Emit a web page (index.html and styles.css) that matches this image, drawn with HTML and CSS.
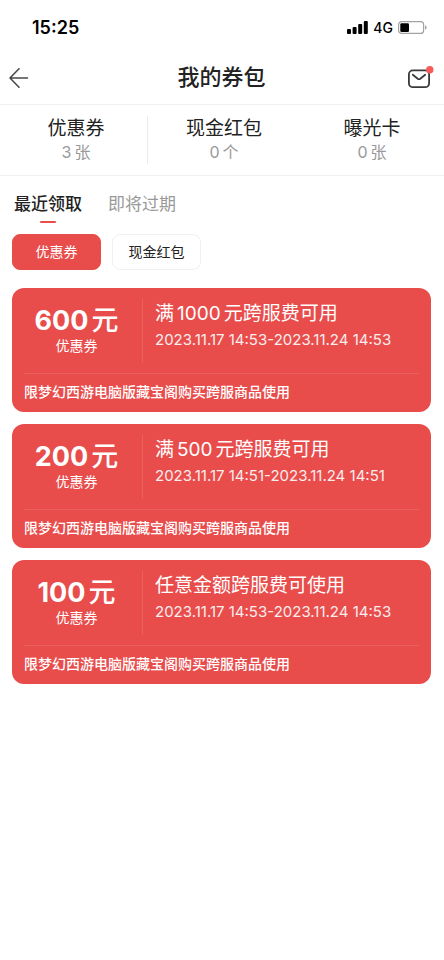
FILE: index.html
```html
<!DOCTYPE html>
<html lang="zh-CN">
<head>
<meta charset="utf-8">
<meta name="viewport" content="width=device-width, initial-scale=1">
<title>我的券包</title>
<link rel="stylesheet" href="styles.css">
</head>
<body>
<div class="status">
  <span class="time">15:25</span>
  <div class="indicators">
    <svg width="21" height="13" viewBox="0 0 21 13" aria-hidden="true">
      <rect x="0" y="8" width="4" height="5" rx="1"/>
      <rect x="5.6" y="6" width="4" height="7" rx="1"/>
      <rect x="11.2" y="3" width="4" height="10" rx="1"/>
      <rect x="16.8" y="0" width="4" height="13" rx="1"/>
    </svg>
    <span class="network">4G</span>
    <svg width="29" height="13" viewBox="0 0 29 13" aria-hidden="true">
      <rect x="0.6" y="0.6" width="25" height="11.8" rx="3" fill="none" stroke="#a3a3a3" stroke-width="1.2"/>
      <rect x="2.3" y="2.2" width="8.7" height="8.7" rx="1.2"/>
      <path d="M27 4.3c2.2.8 2.2 3.6 0 4.4z" fill="#a3a3a3"/>
    </svg>
  </div>
</div>

<header class="nav">
  <button class="icon-button" type="button" aria-label="返回">
    <svg width="20" height="20" viewBox="0 0 20 20" fill="none" stroke="#4a4a4a" stroke-width="1.6" stroke-linecap="round" stroke-linejoin="round" aria-hidden="true">
      <path d="M18.5 10H1.2M10 .8L1 10l9 9.2"/>
    </svg>
  </button>
  <h1 class="title">我的券包</h1>
  <button class="icon-button" type="button" aria-label="消息">
    <svg width="26" height="24" viewBox="0 0 26 24" fill="none" aria-hidden="true">
      <rect x="0.9" y="4.4" width="20.2" height="16.8" rx="4" stroke="#3a3a3c" stroke-width="1.8"/>
      <path d="M4.8 8.7l4.9 4q1.3 1 2.6 0l4.9-4" stroke="#3a3a3c" stroke-width="1.8" stroke-linecap="round"/>
      <circle cx="21.8" cy="3.7" r="3.7" fill="#fa5a5a"/>
    </svg>
  </button>
</header>

<main>
  <section class="stats">
    <a class="stat" href="#coupons"><span class="stat-name">优惠券</span><span class="stat-count"><span class="num">3</span>张</span></a>
    <a class="stat" href="#cash"><span class="stat-name">现金红包</span><span class="stat-count"><span class="num">0</span>个</span></a>
    <a class="stat" href="#exposure"><span class="stat-name">曝光卡</span><span class="stat-count"><span class="num">0</span>张</span></a>
  </section>

  <nav class="tabs">
    <button class="tab active" type="button">最近领取</button>
    <button class="tab" type="button">即将过期</button>
  </nav>

  <div class="chips">
    <button class="chip selected" type="button">优惠券</button>
    <button class="chip" type="button">现金红包</button>
  </div>

  <section class="coupons" id="coupons">
    <article class="coupon">
      <div class="coupon-main">
        <div class="value"><strong class="amount"><span class="num">600</span>元</strong><span class="kind">优惠券</span></div>
        <div class="detail"><h2 class="rule">满<span class="mid">1000</span>元跨服费可用</h2><p class="period">2023.11.17 14:53-2023.11.24 14:53</p></div>
      </div>
      <p class="note">限梦幻西游电脑版藏宝阁购买跨服商品使用</p>
    </article>
    <article class="coupon">
      <div class="coupon-main">
        <div class="value"><strong class="amount"><span class="num">200</span>元</strong><span class="kind">优惠券</span></div>
        <div class="detail"><h2 class="rule">满<span class="mid">500</span>元跨服费可用</h2><p class="period">2023.11.17 14:51-2023.11.24 14:51</p></div>
      </div>
      <p class="note">限梦幻西游电脑版藏宝阁购买跨服商品使用</p>
    </article>
    <article class="coupon">
      <div class="coupon-main">
        <div class="value"><strong class="amount"><span class="num">100</span>元</strong><span class="kind">优惠券</span></div>
        <div class="detail"><h2 class="rule">任意金额跨服费可使用</h2><p class="period">2023.11.17 14:53-2023.11.24 14:53</p></div>
      </div>
      <p class="note">限梦幻西游电脑版藏宝阁购买跨服商品使用</p>
    </article>
  </section>
</main>
</body>
</html>
```
FILE: styles.css
```css
* {
  box-sizing: border-box;
}

body {
  margin: 0;
  background: #fff;
  color: #222;
  font-family: Inter, "Noto Sans CJK SC", sans-serif;
}

h1, h2, p {
  margin: 0;
}

button {
  padding: 0;
  border: 0;
  background: none;
  color: inherit;
  font: inherit;
}

a {
  color: inherit;
  text-decoration: none;
}

svg {
  display: block;
}

.status {
  display: flex;
  align-items: center;
  justify-content: space-between;
  height: 52px;
  padding: 3px 17px 0 32px;
  color: #000;
}

.time {
  font-size: 18px;
  font-weight: 600;
}

.indicators {
  display: flex;
  align-items: center;
  gap: 5px;
}

.network {
  font-size: 14px;
  font-weight: 500;
}

.nav {
  display: flex;
  align-items: center;
  justify-content: space-between;
  height: 53px;
  padding: 0 10px 0 9px;
  border-bottom: 1px solid #f0f0f0;
}

.icon-button {
  width: 26px;
}

.title {
  padding-bottom: 2px;
  font-size: 22px;
  font-weight: 500;
  line-height: 32px;
}

.stats {
  display: grid;
  grid-template-columns: repeat(3, 1fr);
  padding: 11px 0;
  border-bottom: 1px solid #f0f0f0;
}

.stat {
  display: flex;
  flex-direction: column;
  align-items: center;
  padding: 1px 0 0 4px;
}

.stat:first-child {
  padding-left: 5px;
  border-right: 1px solid #ebebeb;
}

.stat-name {
  font-size: 19px;
  line-height: 24px;
}

.stat-count {
  color: #999;
  font-size: 16px;
  line-height: 23px;
}

.num {
  margin-right: 3px;
}

.mid {
  margin: 0 3px;
}

.tabs {
  display: flex;
  gap: 26px;
  padding: 15px 14px 0;
}

.tab {
  display: flex;
  flex-direction: column;
  align-items: center;
  color: #999;
  font-size: 17px;
  line-height: 26px;
}

.tab.active {
  color: #222;
  font-weight: 500;
}

.tab.active::after {
  width: 16px;
  height: 2px;
  margin-top: 4px;
  border-radius: 1px;
  background: #e84d4c;
  content: "";
}

.chips {
  display: flex;
  gap: 11px;
  padding: 11px 12px 18px;
}

.chip {
  width: 89px;
  height: 36px;
  padding-bottom: 2px;
  border: 1px solid #f0f0f0;
  border-radius: 8px;
  font-size: 14px;
}

.chip.selected {
  border-color: #e84d4c;
  background: #e84d4c;
  color: #fff;
}

.coupons {
  display: flex;
  flex-direction: column;
  gap: 12px;
  padding: 0 13px 24px 12px;
}

.coupon {
  padding: 11px 12px 0;
  border-radius: 12px;
  background: #e84d4c;
  color: #fff;
}

.coupon-main {
  display: flex;
  padding-bottom: 10px;
}

.value {
  display: flex;
  flex-direction: column;
  align-items: center;
  width: 119px;
  height: 64px;
  padding: 5px 13px 0 0;
  border-right: 1px solid #eb6160;
}

.amount {
  font-size: 27px;
  font-weight: 500;
  line-height: 34px;
}

.amount .num {
  font-weight: 700;
}

.kind {
  font-size: 14px;
  line-height: 16px;
}

.detail {
  flex: 1;
  padding: 1px 0 0 12px;
}

.rule {
  font-size: 19px;
  font-weight: 400;
  line-height: 28px;
}

.period {
  font-size: 15px;
  line-height: 24px;
  opacity: 0.9;
}

.note {
  padding-bottom: 2px;
  border-top: 1px solid #eb6160;
  font-size: 14px;
  font-weight: 500;
  line-height: 36px;
}
```
